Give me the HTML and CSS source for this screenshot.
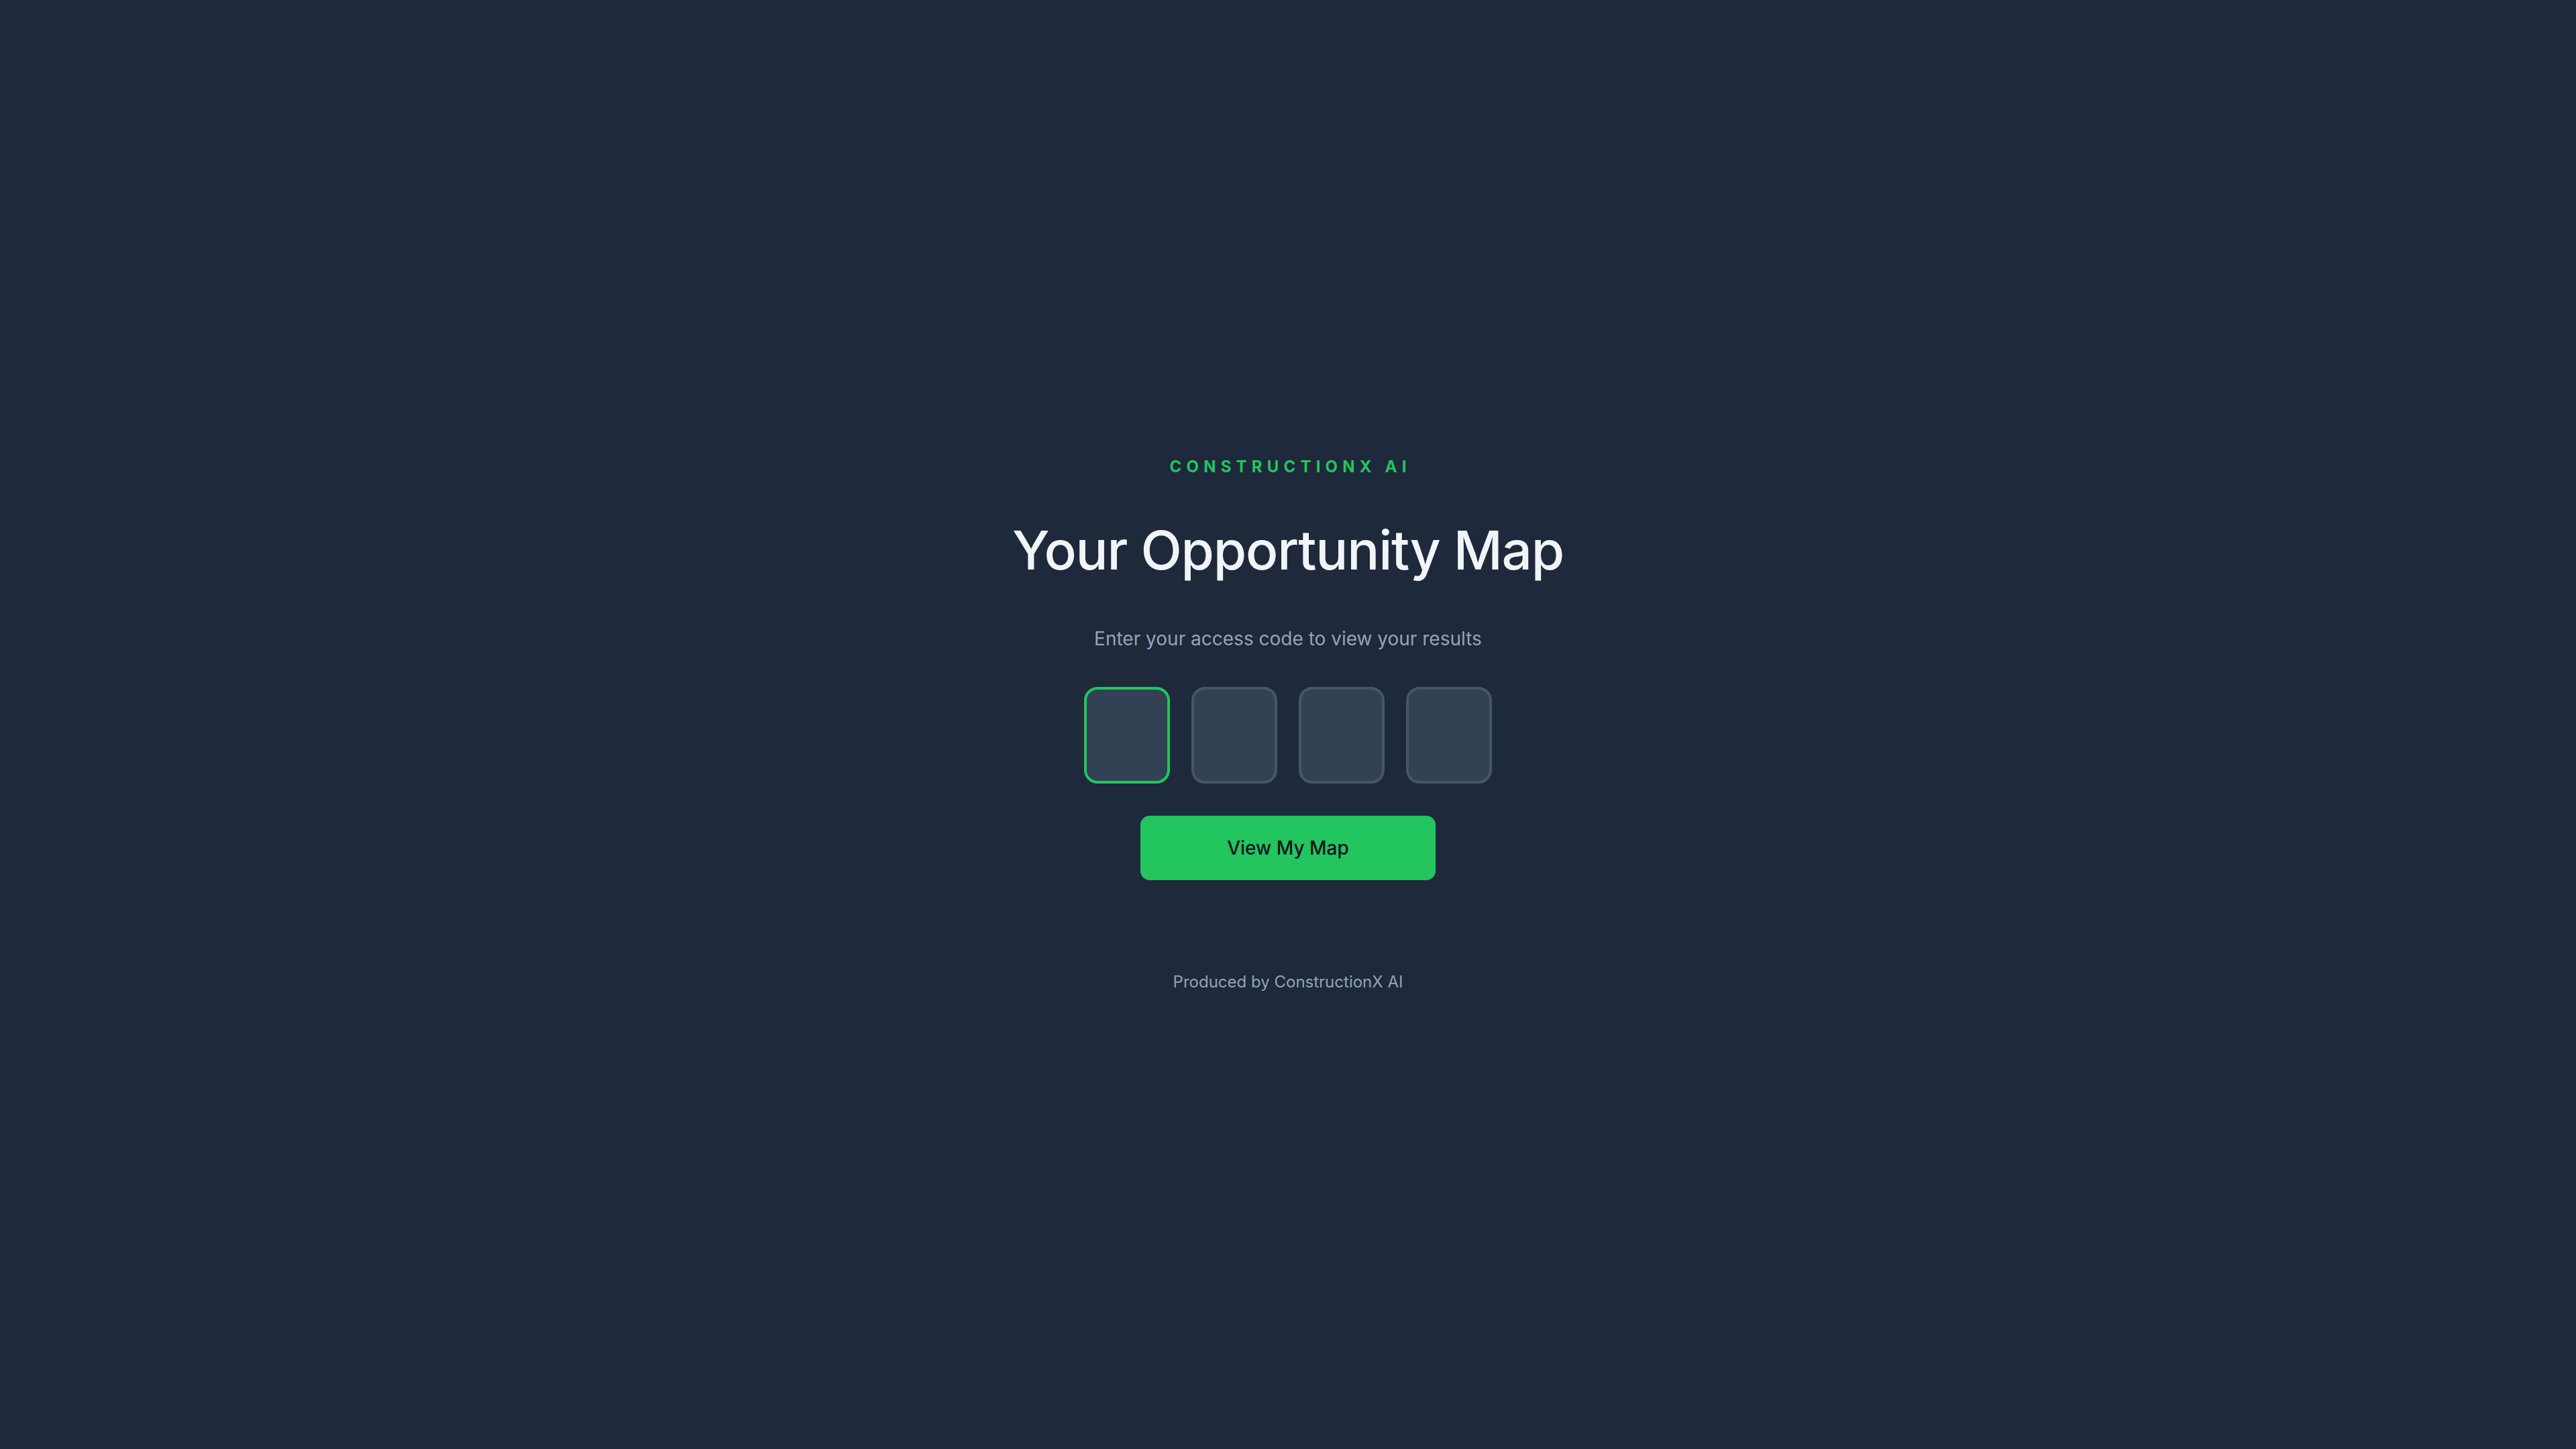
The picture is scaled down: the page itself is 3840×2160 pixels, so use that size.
FILE: index.html
```html
<!DOCTYPE html>
<html lang="en">
<head>
<meta charset="utf-8">
<title>Your Opportunity Map</title>
<link rel="stylesheet" href="styles.css">
</head>
<body>
<main class="gate">
  <div class="brand">CONSTRUCTIONX AI</div>
  <h1 class="title">Your Opportunity Map</h1>
  <p class="subtitle">Enter your access code to view your results</p>
  <form class="code-form">
    <div class="code-row">
      <input class="code-cell is-active" type="text" maxlength="1" aria-label="Digit 1">
      <input class="code-cell" type="text" maxlength="1" aria-label="Digit 2">
      <input class="code-cell" type="text" maxlength="1" aria-label="Digit 3">
      <input class="code-cell" type="text" maxlength="1" aria-label="Digit 4">
    </div>
    <button class="submit" type="button">View My Map</button>
  </form>
  <p class="footer">Produced by ConstructionX AI</p>
</main>
</body>
</html>
```

FILE: styles.css
```css
* { box-sizing: border-box; }

html, body {
  margin: 0;
  height: 100%;
}

body {
  background: #1e293b;
  font-family: Inter, "Noto Sans", sans-serif;
  color: #f1f5f9;
}

.gate {
  min-height: 100vh;
  display: flex;
  flex-direction: column;
  align-items: center;
  justify-content: center;
  text-align: center;
}

.brand {
  font-size: 24px;
  line-height: 32px;
  font-weight: 700;
  letter-spacing: 0.3em;
  margin-right: -0.3em;
  color: #22c55e;
}

.title {
  margin: 60px 0 0;
  font-size: 80px;
  line-height: 96px;
  font-weight: 500;
  letter-spacing: -0.015em;
  color: #f1f5f9;
}

.subtitle {
  margin: 66px 0 0;
  font-size: 28px;
  line-height: 36px;
  color: #94a3b8;
}

.code-form {
  display: flex;
  flex-direction: column;
  align-items: center;
  margin-top: 54px;
}

.code-row {
  display: flex;
  gap: 32px;
}

.code-cell {
  width: 128px;
  height: 144px;
  border: 4px solid #475569;
  border-radius: 20px;
  background: #334155;
  outline: none;
  color: #f1f5f9;
  font: 600 56px Inter, sans-serif;
  text-align: center;
}

.code-cell.is-active {
  border-color: #22c55e;
}

.submit {
  margin-top: 48px;
  width: 440px;
  height: 96px;
  border: 0;
  border-radius: 14px;
  background: #22c55e;
  color: #0b1220;
  font: 500 28px Inter, sans-serif;
}

.footer {
  margin: 136px 0 0;
  font-size: 24px;
  line-height: 32px;
  color: #94a3b8;
}
```
